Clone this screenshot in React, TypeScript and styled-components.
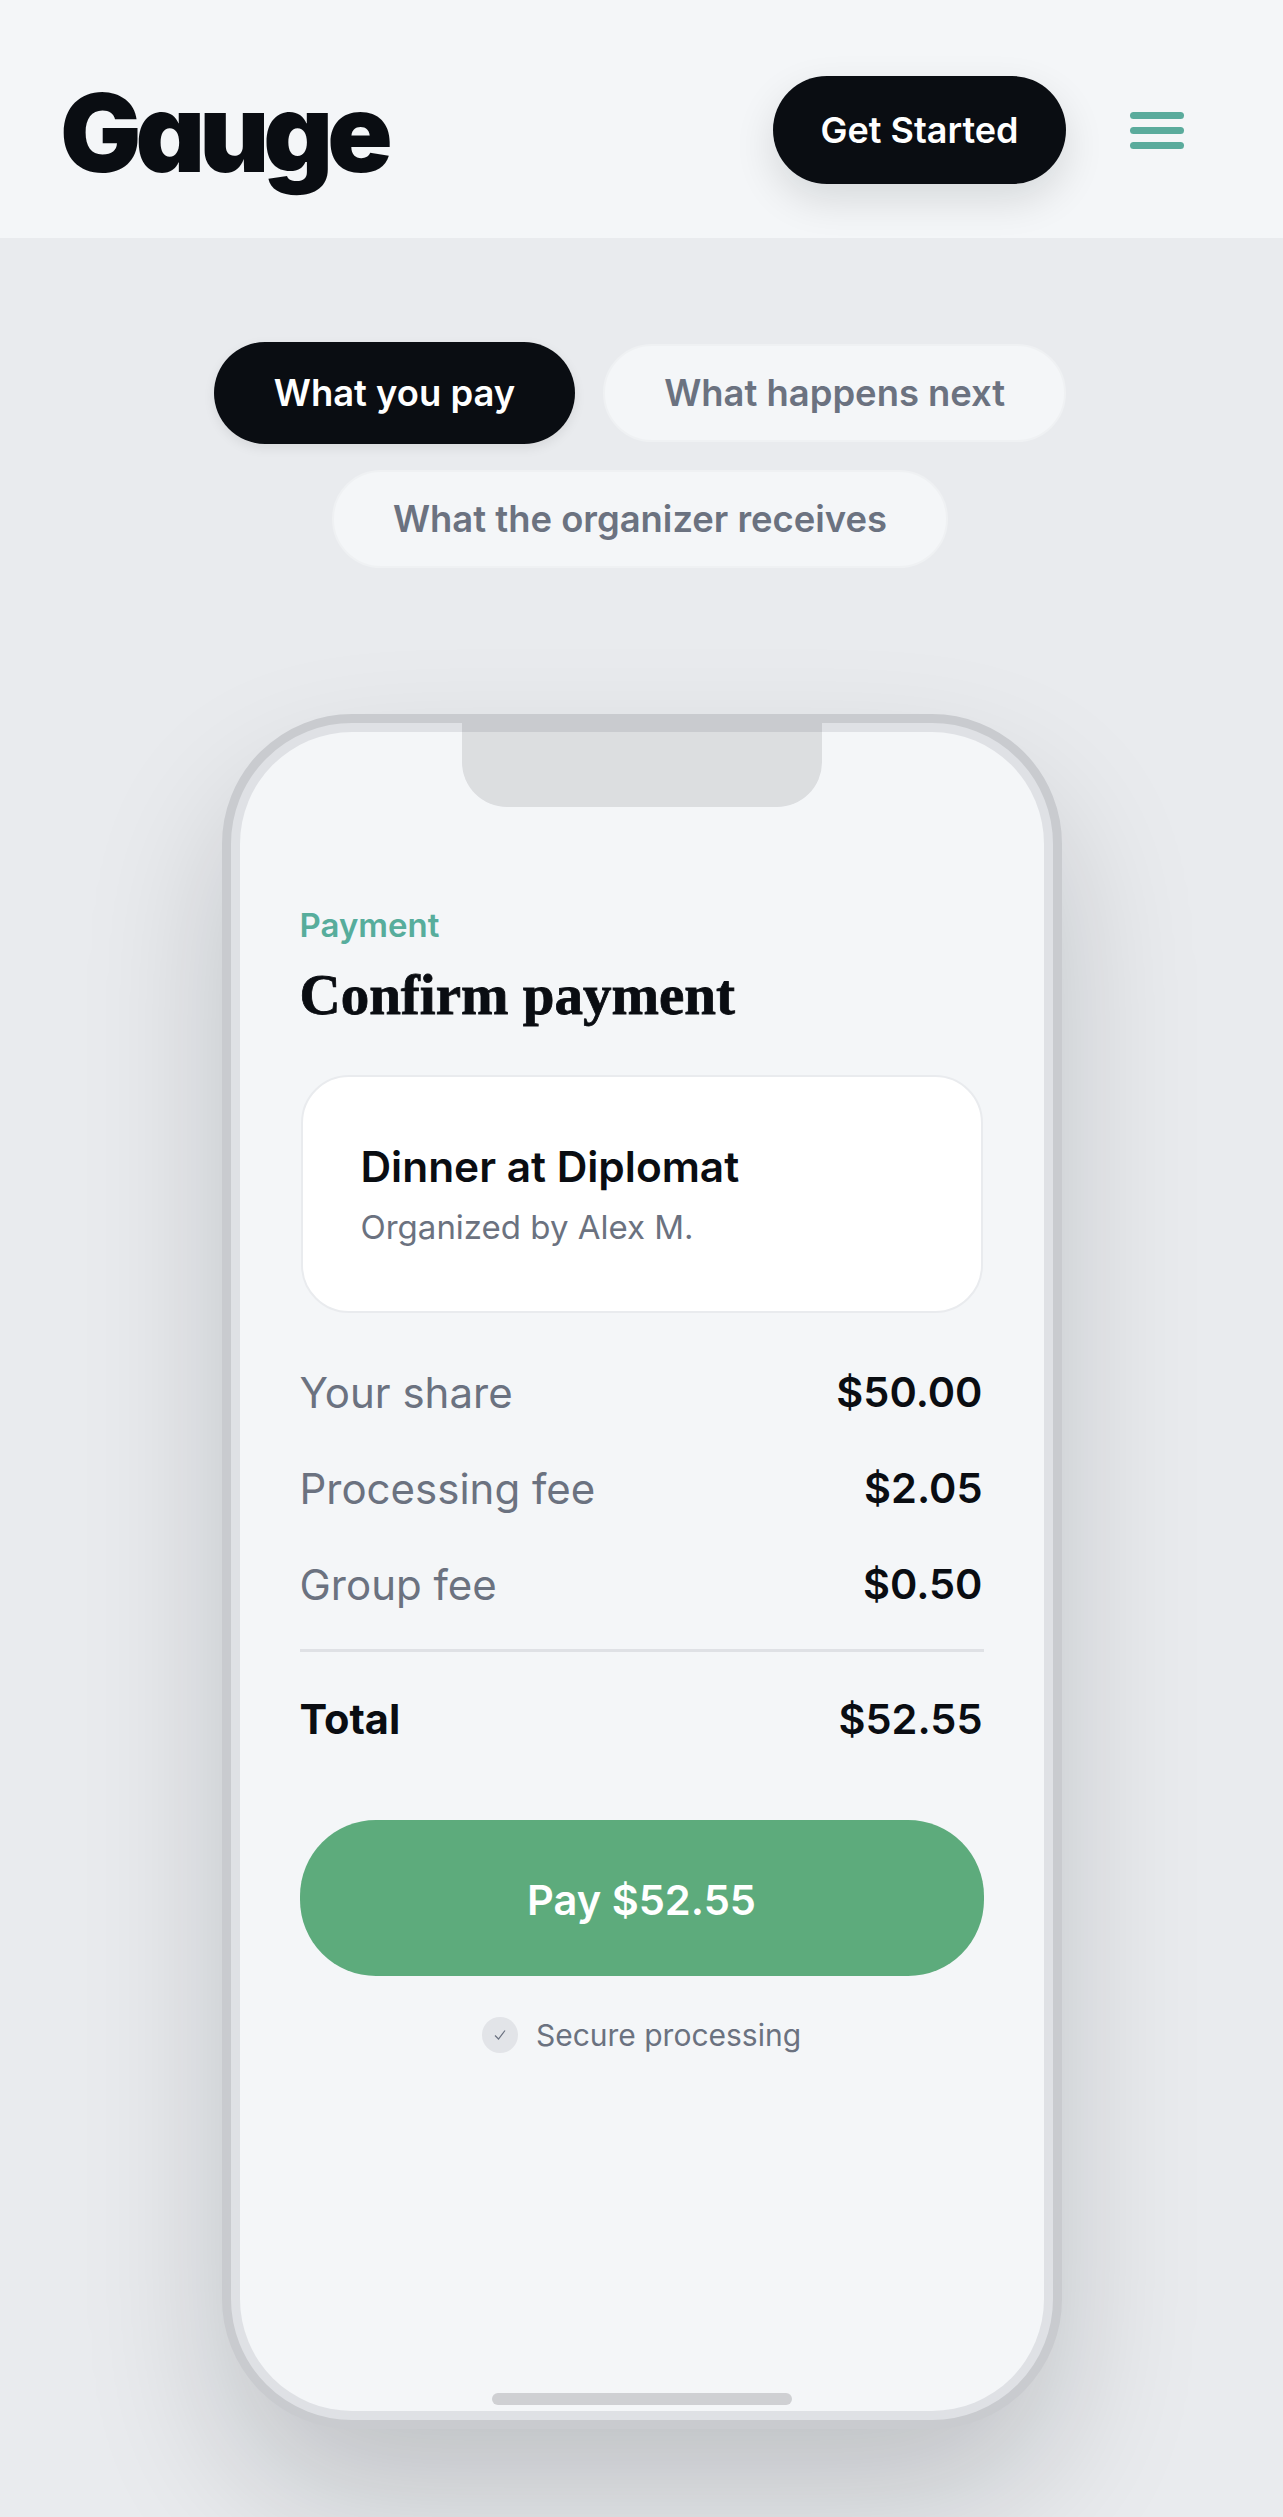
import React from 'react';
import styled, { createGlobalStyle } from 'styled-components';

const GlobalStyle = createGlobalStyle`
	html, body { margin: 0; padding: 0; background: #e9ebee; }
	body { font-family: Inter, "Liberation Sans", sans-serif; color: #0a0d12; }
	* { box-sizing: border-box; }
`;

const Page = styled.div`
	width: 1283px;
	height: 2517px;
	overflow: hidden;
	background: #e9ebee;
`;

const Header = styled.header`
	height: 238px;
	padding: 22px 99px 0 60px;
	background: #f4f6f8;
	display: flex;
	align-items: center;
	justify-content: space-between;
`;

const Logo = styled.div`
	font-size: 108px;
	font-weight: 900;
	line-height: 1;
	letter-spacing: -6px;
	font-feature-settings: 'cv11' 1;
	color: #0a0d12;
	margin-top: 5px;
`;

const HeaderActions = styled.div`
	display: flex;
	align-items: center;
	gap: 64px;
`;

const CtaButton = styled.button`
	width: 293px;
	height: 108px;
	border: 0;
	border-radius: 54px;
	background: #0a0d12;
	color: #fff;
	font: 600 36px Inter, sans-serif;
	box-shadow: 0 16px 40px rgba(10, 13, 18, 0.12);
`;

const Burger = styled.div`
	width: 54px;
	display: flex;
	flex-direction: column;
	gap: 8px;
`;

const BurgerBar = styled.span`
	height: 7px;
	border-radius: 4px;
	background: #5aab9c;
`;

const Tabs = styled.nav`
	width: 900px;
	margin: 104px 0 0 190px;
	display: flex;
	flex-wrap: wrap;
	justify-content: center;
	align-items: center;
	gap: 26px 28px;
`;

const Tab = styled.div<{ $active?: boolean }>`
	height: ${p => (p.$active ? '102px' : '98px')};
	padding: 0 ${p => (p.$active ? '60px' : '59px')};
	display: flex;
	align-items: center;
	border-radius: 51px;
	font-size: 36.4px;
	font-weight: 600;
	color: ${p => (p.$active ? '#fff' : '#6b7280')};
	background: ${p => (p.$active ? '#0a0d12' : '#f4f6f8')};
	border: ${p => (p.$active ? '0' : '2px solid #eff1f3')};
	box-shadow: ${p => (p.$active ? '0 4px 12px rgba(10, 13, 18, 0.08)' : 'none')};
`;

const Phone = styled.div`
	position: relative;
	width: 840px;
	height: 1715px;
	margin: 146px auto 0;
	border: 9px solid #c9cbcf;
	padding: 9px;
	border-radius: 130px;
	background: #dfe1e5;
	box-shadow: 0 70px 150px -10px rgba(10, 13, 18, 0.2);
`;

const Notch = styled.div`
	position: absolute;
	top: 0;
	left: 231px;
	width: 360px;
	height: 84px;
	border-radius: 0 0 45px 45px;
	background: rgba(10, 13, 18, 0.1);
`;

const HomeBar = styled.div`
	position: absolute;
	bottom: 15px;
	left: 261px;
	width: 300px;
	height: 12px;
	border-radius: 6px;
	background: #cfd0d3;
`;

const Screen = styled.div`
	height: 100%;
	border-radius: 112px;
	background: #f4f6f8;
	padding: 173px 60px 0;
`;

const Eyebrow = styled.div`
	font-size: 33px;
	font-weight: 600;
	line-height: 40px;
	color: #57ad9c;
`;

const Title = styled.h1`
	margin: 15px 0 0;
	font-family: "Liberation Serif", serif;
	font-size: 57px;
	font-weight: 700;
	line-height: 70px;
	color: #0a0d12;
	-webkit-text-stroke: 0.8px #0a0d12;
`;

const EventCard = styled.div`
	margin: 45px 1px 0;
	height: 238px;
	padding: 0 58px;
	display: flex;
	flex-direction: column;
	justify-content: center;
	gap: 13px;
	border: 2px solid #e9ebee;
	border-radius: 48px;
	background: #fff;
`;

const EventName = styled.div`
	font-size: 42.4px;
	font-weight: 600;
	line-height: 52px;
`;

const EventMeta = styled.div`
	font-size: 33px;
	line-height: 42px;
	color: #6b7280;
`;

const Rows = styled.div`
	margin-top: 31px;
`;

const Row = styled.div`
	height: 96px;
	display: flex;
	align-items: center;
	justify-content: space-between;
`;

const RowLabel = styled.span`
	font-size: 42px;
	color: #6b7280;
`;

const RowValue = styled.span`
	font-size: 41.5px;
	font-weight: 600;
	margin-right: 1px;
`;

const Divider = styled.div`
	height: 3px;
	margin-top: 17px;
	background: #dfe1e5;
`;

const TotalRow = styled(Row)`
	margin-top: 19px;
	font-size: 41.5px;
	font-weight: 700;
`;

const PayButton = styled.button`
	display: block;
	width: 100%;
	height: 156px;
	margin-top: 53px;
	padding: 3px 0 0;
	border: 0;
	border-radius: 76px;
	background: #5dab7c;
	color: #fff;
	font: 600 41.6px Inter, sans-serif;
`;

const Secure = styled.div`
	margin-top: 41px;
	display: flex;
	align-items: center;
	justify-content: center;
	gap: 18px;
	font-size: 30px;
	color: #6b7280;
`;

const SecureIcon = styled.span`
	width: 36px;
	height: 36px;
	border-radius: 50%;
	background: #e2e4e8;
	display: flex;
	align-items: center;
	justify-content: center;
`;

const tabs = ['What you pay', 'What happens next', 'What the organizer receives'];
const rows = [
	['Your share', '$50.00'],
	['Processing fee', '$2.05'],
	['Group fee', '$0.50'],
];

export default function App() {
	return (
		<Page>
			<GlobalStyle />
			<Header>
				<Logo>Gauge</Logo>
				<HeaderActions>
					<CtaButton>Get Started</CtaButton>
					<Burger>
						<BurgerBar />
						<BurgerBar />
						<BurgerBar />
					</Burger>
				</HeaderActions>
			</Header>

			<Tabs>
				{tabs.map((tab, i) => (
					<Tab key={tab} $active={i === 0}>
						{tab}
					</Tab>
				))}
			</Tabs>

			<Phone>
				<Notch />
				<Screen>
					<Eyebrow>Payment</Eyebrow>
					<Title>Confirm payment</Title>
					<EventCard>
						<EventName>Dinner at Diplomat</EventName>
						<EventMeta>Organized by Alex M.</EventMeta>
					</EventCard>
					<Rows>
						{rows.map(([label, value]) => (
							<Row key={label}>
								<RowLabel>{label}</RowLabel>
								<RowValue>{value}</RowValue>
							</Row>
						))}
						<Divider />
						<TotalRow>
							<span>Total</span>
							<RowValue>$52.55</RowValue>
						</TotalRow>
					</Rows>
					<PayButton>Pay $52.55</PayButton>
					<Secure>
						<SecureIcon>
							<svg width="14" height="14" viewBox="0 0 14 14" fill="none" stroke="#6b7280" strokeWidth="1.2">
								<path d="M2 7.5 L5.5 11 L12 2.5" />
							</svg>
						</SecureIcon>
						Secure processing
					</Secure>
				</Screen>
				<HomeBar />
			</Phone>
		</Page>
	);
}
